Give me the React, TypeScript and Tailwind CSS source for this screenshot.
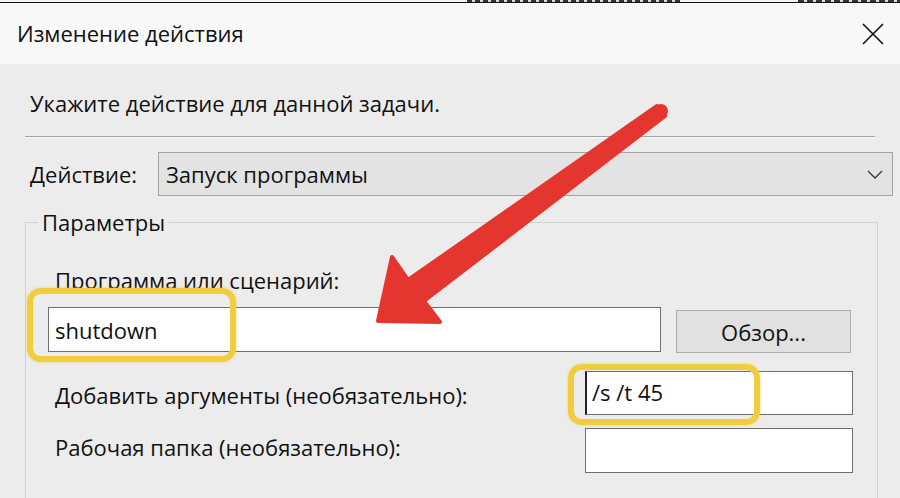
import React from "react";

const font = { fontFamily: '"Open Sans", "Noto Sans", sans-serif' };

export default function App() {
  return (
    <div
      className="relative w-[900px] h-[498px] overflow-hidden bg-[#ececec] text-[#111] text-[22px] leading-[28px]"
      style={font}
    >
      {/* top strip from window behind */}
      <div className="h-[2px] bg-[#f4f4f4] flex">
        <div className="ml-[467px] w-[213px] h-[2px] bg-[repeating-linear-gradient(90deg,#333_0px,#333_5px,#ddd_5px,#ddd_8px)]" />
        <div className="ml-[118px] w-[102px] h-[2px] bg-[repeating-linear-gradient(90deg,#333_0px,#333_6px,#ddd_6px,#ddd_9px)]" />
      </div>
      <div className="h-[1px] bg-[#111]" />

      {/* title bar */}
      <div className="h-[61px] bg-[#f8f8f8] flex items-center justify-between pl-[17px] pr-[16px]">
        <span className="mt-[-1px]">Изменение действия</span>
        <svg width="22" height="22" viewBox="0 0 22 22">
          <path d="M1 1 L21 21 M21 1 L1 21" stroke="#111" strokeWidth="1.6" fill="none" />
        </svg>
      </div>

      {/* content */}
      <div className="pt-[25px]">
        <div className="pl-[30px]">Укажите действие для данной задачи.</div>
        <div className="mt-[19px] mx-[25px] h-[1px] bg-[#a0a0a0]" />
        <div className="mx-[25px] h-[1px] bg-[#fbfbfb]" />

        <div className="mt-[14px] flex items-center pl-[30px] pr-[7px]">
          <span className="w-[128px]">Действие:</span>
          <div className="flex-1 h-[44px] bg-[#e3e3e3] border border-[#a3a3a3] flex items-center justify-between pl-[7px] pr-[9px]">
            <span>Запуск программы</span>
            <svg width="16" height="9" viewBox="0 0 16 9">
              <path d="M1 1 L8 8 L15 1" stroke="#333" strokeWidth="1.3" fill="none" />
            </svg>
          </div>
        </div>

        <fieldset className="mt-[12px] ml-[25px] w-[853px] h-[400px] border border-[#d2d2d2] p-0 m-0">
          <legend className="ml-[12px] px-[4px]">Параметры</legend>
          <div className="pl-[29px] mt-[30px]">Программа или сценарий:</div>
          <div className="mt-[13px] flex items-start">
            <div className="ml-[22px] w-[613px] h-[45px] bg-white border-[1.5px] border-[#6f6f6f] flex items-center pl-[6px]">
              shutdown
            </div>
            <div className="ml-[15px] mt-[3px] w-[175px] h-[43px] bg-[#e1e1e1] border border-[#adadad] flex items-center justify-center">
              Обзор...
            </div>
          </div>
          <div className="mt-[18px] flex items-center">
            <span className="w-[559px] pl-[29px] mt-[4px]">Добавить аргументы (необязательно):</span>
            <div className="w-[268px] h-[44px] bg-white border-[1.5px] border-[#6f6f6f] border-l-[2px] border-l-[#222] flex items-center pl-[5px] pb-[2px]">
              /s /t 45
            </div>
          </div>
          <div className="mt-[13px] flex items-center">
            <span className="w-[559px] pl-[29px] mt-[-8px]">Рабочая папка (необязательно):</span>
            <div className="w-[268px] h-[45px] bg-white border-[1.5px] border-[#6f6f6f]" />
          </div>
        </fieldset>
      </div>

      {/* yellow highlights */}
      <div className="absolute left-[27px] top-[288px] w-[209px] h-[74px] rounded-[14px] border-[6px] border-[#efcd3e] shadow-[0_0_3px_rgba(239,205,62,0.7)] pointer-events-none" />
      <div className="absolute left-[568px] top-[364px] w-[192px] h-[61px] rounded-[14px] border-[6px] border-[#efcd3e] shadow-[0_0_3px_rgba(239,205,62,0.7)] pointer-events-none" />

      {/* red arrow */}
      <svg className="absolute left-0 top-0 pointer-events-none" width="900" height="498" viewBox="0 0 900 498">
        <polygon
          points="378,321 392,257 408,280 657,106 665,116 424,301 440,322"
          fill="#e4362f"
          stroke="#f3b3ae"
          strokeWidth="2"
          strokeLinejoin="round"
        />
        <polygon
          points="378,321 392,257 408,280 657,106 665,116 424,301 440,322"
          fill="#e4362f"
          stroke="#e4362f"
          strokeWidth="4"
          strokeLinejoin="round"
        />
        <circle cx="661" cy="111" r="7" fill="#e4362f" />
      </svg>
    </div>
  );
}
